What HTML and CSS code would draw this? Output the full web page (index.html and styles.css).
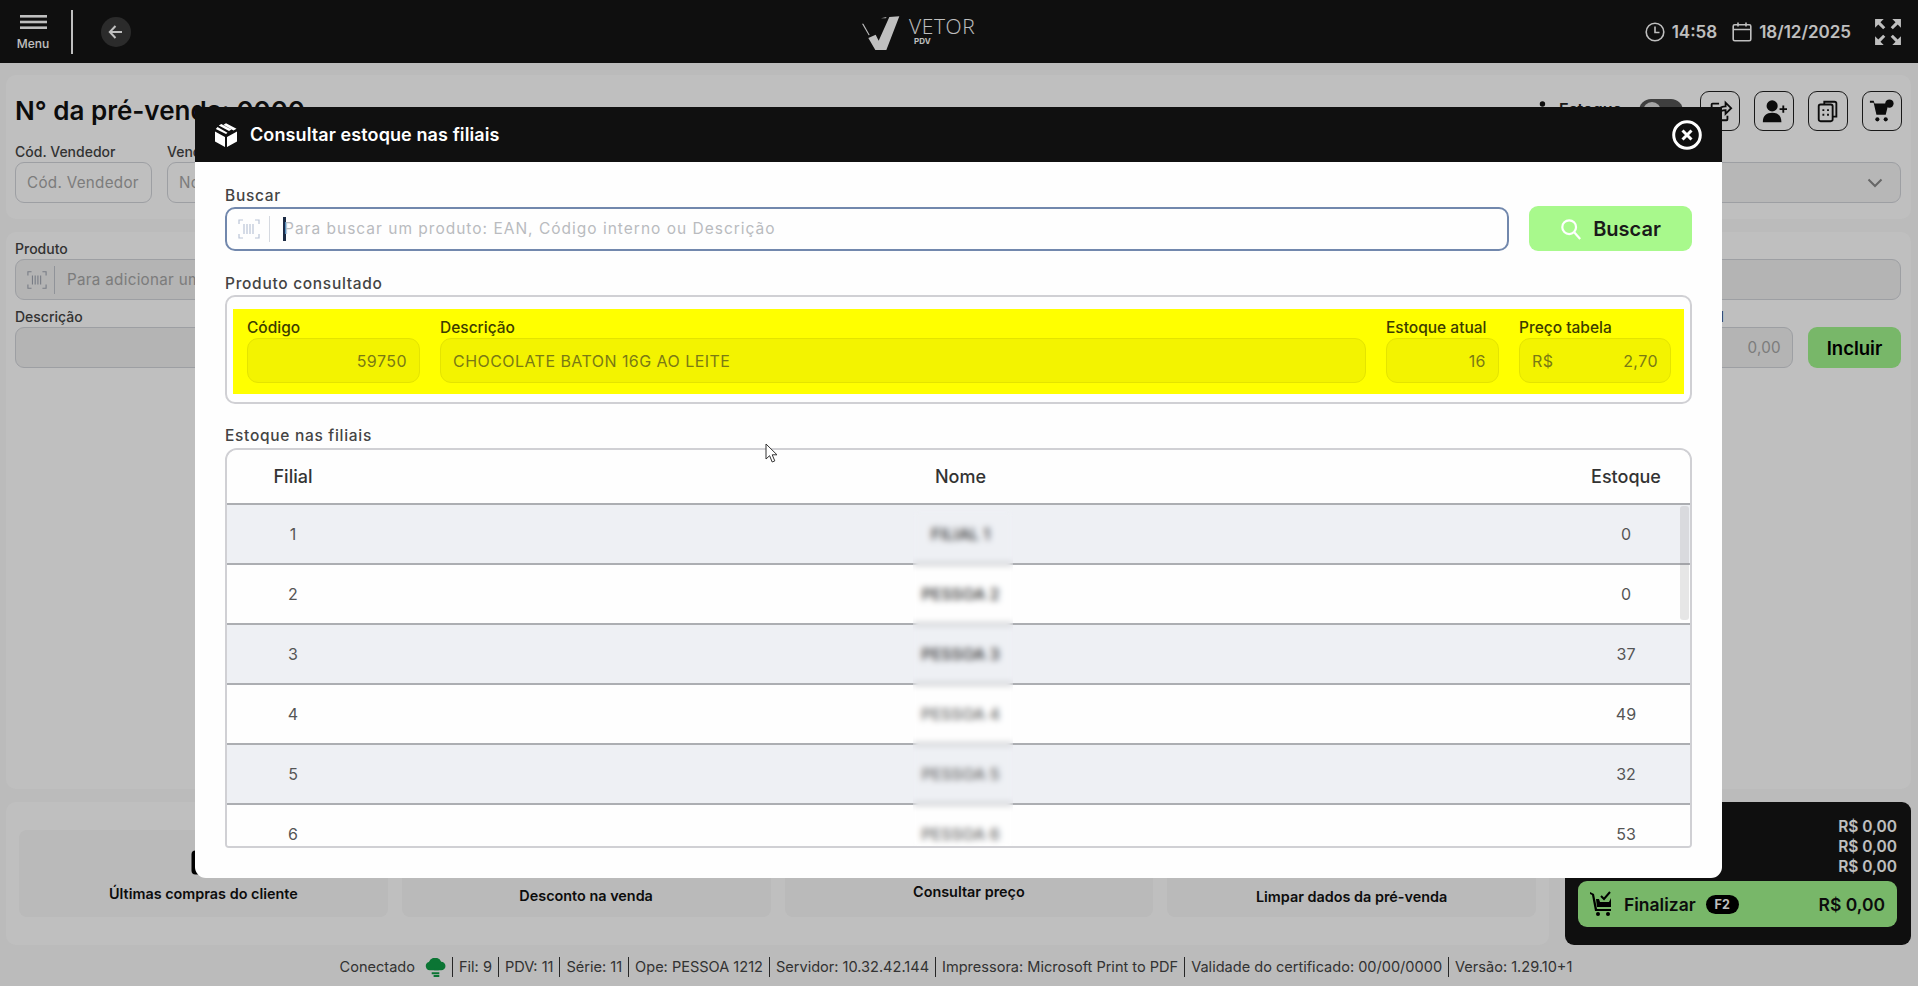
FILE: index.html
```html
<!DOCTYPE html>
<html lang="pt-BR">
<head>
<meta charset="utf-8">
<title>Consultar estoque nas filiais</title>
<link rel="stylesheet" href="styles.css">
</head>
<body>
<div class="page">
  <header class="topbar">
    <div class="top-left">
      <div class="menu">
        <svg class="menu-icon" viewBox="0 0 27 14"><rect y="0" width="27" height="2.6"/><rect y="5.7" width="27" height="2.6"/><rect y="11.4" width="27" height="2.6"/></svg>
        <span>Menu</span>
      </div>
      <div class="top-divider"></div>
      <div class="back">
        <svg viewBox="0 0 20 20"><path d="M16 10H4M9.5 4 3.8 10l5.7 6"/></svg>
      </div>
    </div>
    <div class="logo">
      <svg class="logo-mark" viewBox="60 36 120 108">
        <polygon points="145,42 175,40 136,141 103,141 82,105 104,95 113,113"/>
        <polygon points="63,62 67,62 86,96 83,97"/>
        <polygon points="120,46 137,42 134,46"/>
      </svg>
      <div class="logo-text"><span class="logo-name">VETOR</span><span class="logo-sub">PDV</span></div>
    </div>
    <div class="top-right">
      <svg class="clock" viewBox="0 0 20 20"><circle cx="10" cy="10" r="8.8"/><path d="M10 4.5V10.5H14.5"/></svg>
      <span class="time">14:58</span>
      <svg class="cal" viewBox="0 0 20 20"><rect x="1.2" y="2.8" width="17.6" height="16" rx="1.5"/><path d="M1.2 7.5H18.8M6 .5V4.5M14 .5V4.5"/></svg>
      <span class="date">18/12/2025</span>
      <svg class="expand" viewBox="1 1 26 26"><path d="M2 10V2H10L7 5 11.5 9.5 9.5 11.5 5 7ZM26 10V2H18L21 5 16.5 9.5 18.5 11.5 23 7ZM2 18V26H10L7 23 11.5 18.5 9.5 16.5 5 21ZM26 18V26H18L21 23 16.5 18.5 18.5 16.5 23 21Z"/></svg>
    </div>
  </header>

  <main class="content">
    <section class="card card-head">
      <div class="head-row">
        <h1 class="sale-title">N° da pré-venda: 0000</h1>
        <div class="head-tools">
          <svg class="stock-ico" viewBox="0 0 24 24"><path d="M2 10h6v9H2zM14 5.500a2.500 2.500 0 1 1-5 0 2.500 2.500 0 0 1 5 0zM9 9h5v10H9zM15 13h5v6h-5z"/></svg>
          <span class="stock-label">Estoque</span>
          <span class="toggle"><i></i></span>
          <button class="icon-btn"><svg viewBox="0 0 28 28"><path class="line" d="M13 6H6a1 1 0 0 0-1 1v11a1 1 0 0 0 1 1h3M12 13c2-3 5-4 8-4V5l6 6-6 6v-4c-3 0-6 1-8 4zM22 19v4a1 1 0 0 1-1 1H13v-5"/></svg></button>
          <button class="icon-btn"><svg viewBox="0 0 28 28"><circle cx="12" cy="8.5" r="6"/><path d="M2 26c0-7 4-10 10-10s10 3 10 10zM23 8h2v3h3v2h-3v3h-2v-3h-3v-2h3z"/></svg></button>
          <button class="icon-btn"><svg viewBox="0 0 28 28"><path class="line" d="M10 6V4h11a2 2 0 0 1 2 2v14h-3M6 7h11a2 2 0 0 1 2 2v14a2 2 0 0 1-2 2H6a2 2 0 0 1-2-2V9a2 2 0 0 1 2-2zM8 13h2M13 13h2M8 18h2M13 18h2"/></svg></button>
          <button class="icon-btn"><svg viewBox="0 0 28 28"><path d="M1 3h4l1 3h15l-3 12H8L5 5H1z"/><circle cx="9" cy="23" r="2.2"/><circle cx="18" cy="23" r="2.2"/><circle cx="22" cy="6" r="4.5"/></svg></button>
        </div>
      </div>
      <div class="head-fields">
        <div class="field"><label>Cód. Vendedor</label><div class="input">Cód. Vendedor</div></div>
        <div class="field"><label>Vendedor</label><div class="input">Nome do vendedor</div></div>
        <div class="field"><div class="field-spacer"></div><div class="input input-select"><svg viewBox="0 0 16 10"><path d="M1.5 1.5 8 8l6.5-6.5"/></svg></div></div>
      </div>
    </section>

    <section class="card card-product">
      <div class="field"><label>Produto</label>
        <div class="input input-dark">
          <svg class="barcode" viewBox="0 0 22 22"><path d="M1 6V2h4M17 2h4v4M1 16v4h4M17 20h4v-4M6 6v10M9 6v10M12 6v10M15 6v10"/></svg>
          <span class="ico-sep"></span>Para adicionar um produto
        </div>
      </div>
      <div class="product-row">
        <div class="field field-grow"><label>Descrição</label><div class="input input-dark"></div></div>
        <div class="field field-total"><label>Total</label><div class="input input-dark input-right">0,00</div></div>
        <button class="include">Incluir</button>
      </div>
    </section>

    <section class="bottom-row">
      <div class="card actions">
        <div class="tile tile-a"><svg class="tile-ico" viewBox="0 0 27 27"><rect x="1.5" y="1.5" width="24" height="24" rx="4"/></svg><span>Últimas compras do cliente</span></div>
        <div class="tile tile-b"><svg class="tile-ico" viewBox="0 0 27 27"><circle cx="13.5" cy="13.5" r="10"/></svg><span>Desconto na venda</span></div>
        <div class="tile tile-c"><svg class="tile-ico" viewBox="0 0 27 27"><circle cx="13.5" cy="13.5" r="10"/></svg><span>Consultar preço</span></div>
        <div class="tile tile-d"><svg class="tile-ico" viewBox="0 0 27 27"><circle cx="13.5" cy="13.5" r="13"/></svg><span>Limpar dados da pré-venda</span></div>
      </div>
      <aside class="totals">
        <div class="total-line">R$ 0,00</div>
        <div class="total-line">R$ 0,00</div>
        <div class="total-line">R$ 0,00</div>
        <button class="finish">
          <svg class="finish-ico" viewBox="0 0 26 26"><path d="M1 1 5 3l3 15h14v2H6L3 4 1 3z"/><path d="M7 8h3l1 3h9l2-4v9H8z"/><path class="check" d="M12 5l3 3 6-7"/><circle cx="9" cy="23" r="2"/><circle cx="19" cy="23" r="2"/></svg>
          <span class="finish-label">Finalizar</span>
          <span class="key">F2</span>
          <span class="finish-value">R$ 0,00</span>
        </button>
      </aside>
    </section>
  </main>

  <footer class="status">
    <span class="st-first">Conectado</span>
    <svg class="cloud" viewBox="0 0 22 20"><path d="M5 13a4.5 4.5 0 0 1-1-8.8A7 7 0 0 1 17 4a4.5 4.5 0 0 1 0 9z"/><path d="M7 15h8v2H7zM9 18h6v2H9zM9.5 11h5v2h-5z"/></svg>
    <span class="st">Fil: 9</span><span class="st">PDV: 11</span><span class="st">Série: 11</span><span class="st">Ope: PESSOA 1212</span><span class="st">Servidor: 10.32.42.144</span><span class="st">Impressora: Microsoft Print to PDF</span><span class="st">Validade do certificado: 00/00/0000</span><span class="st">Versão: 1.29.10+1</span>
  </footer>
</div>

<div class="backdrop"></div>

<div class="modal">
  <div class="modal-head">
    <svg class="box-ico" viewBox="0 0 24 24"><path d="M1 8.5 11 14v10L1 18.5zM23 8.5 13 14v10l10-5.500zM7.300 1 17.500 6.500 15 8 4.800 2.500zM12 .2 22.500 5.800 19.500 7.400 9.500 1.800zM3.500 4 13.500 9.800 12 11 1.800 6z"/></svg>
    <h2>Consultar estoque nas filiais</h2>
    <svg class="close-ico" viewBox="0 0 30 30"><circle cx="15" cy="15" r="13.300"/><path d="M10.500 10.500l9 9M19.500 10.500l-9 9"/></svg>
  </div>
  <div class="modal-body">
    <label class="m-label">Buscar</label>
    <div class="search-row">
      <div class="search-input">
        <svg class="barcode" viewBox="0 0 22 22"><path d="M1 6V2h4M17 2h4v4M1 16v4h4M17 20h4v-4M6 6v10M9 6v10M12 6v10M15 6v10"/></svg>
        <span class="ico-sep"></span>
        <span class="caret"></span>
        <span class="placeholder">Para buscar um produto: EAN, Código interno ou Descrição</span>
      </div>
      <button class="search-btn">
        <svg viewBox="0 0 24 24"><circle cx="10" cy="10" r="7.500"/><path d="M15.500 15.500 22 23"/></svg>
        Buscar
      </button>
    </div>

    <label class="m-label m-label-gap">Produto consultado</label>
    <div class="product-box">
      <div class="product-hl">
        <div class="hl-field"><label>Código</label><div class="hl-input hl-right">59750</div></div>
        <div class="hl-field"><label>Descrição</label><div class="hl-input">CHOCOLATE BATON 16G AO LEITE</div></div>
        <div class="hl-field"><label>Estoque atual</label><div class="hl-input hl-right">16</div></div>
        <div class="hl-field"><label>Preço tabela</label><div class="hl-input hl-split"><span>R$</span><span>2,70</span></div></div>
      </div>
    </div>

    <label class="m-label m-label-gap2">Estoque nas filiais</label>
    <div class="table">
      <div class="t-row t-head"><span>Filial</span><span>Nome</span><span>Estoque</span></div>
      <div class="t-row t-odd"><span>1</span><span class="t-name">FILIAL 1</span><span>0</span></div>
      <div class="t-row"><span>2</span><span class="t-name">PESSOA 2</span><span>0</span></div>
      <div class="t-row t-odd"><span>3</span><span class="t-name">PESSOA 3</span><span>37</span></div>
      <div class="t-row"><span>4</span><span class="t-name t-faint">PESSOA 4</span><span>49</span></div>
      <div class="t-row t-odd"><span>5</span><span class="t-name t-faint">PESSOA 5</span><span>32</span></div>
      <div class="t-row"><span>6</span><span class="t-name t-faint">PESSOA 6</span><span>53</span></div>
      <div class="t-blur"></div>
      <div class="t-scroll"></div>
    </div>
  </div>
  <svg class="pointer" viewBox="0 0 13 20"><path d="M1 1v15l3.600-3.300L7.200 19l2.600-1.100-2.600-6.100H12z"/></svg>
</div>
</body>
</html>
```
FILE: styles.css
```css
* { box-sizing: border-box; }
html, body { margin: 0; height: 100%; overflow: hidden; }
body { font-family: Inter, "Liberation Sans", sans-serif; color: #222; background: #fafafa; }
button { font-family: inherit; border: 0; padding: 0; }
label { display: block; font-size: 14px; font-weight: 500; line-height: 14px; color: #444; }

.page { width: 1918px; height: 986px; display: flex; flex-direction: column; }

/* top bar */
.topbar { height: 63px; flex: none; background: #151515; display: flex; align-items: center; color: #fff; }
.top-left { flex: 0 0 861px; display: flex; align-items: center; }
.menu { width: 40px; margin-left: 13px; display: flex; flex-direction: column; align-items: center; gap: 8px; font-size: 12px; font-weight: 500; line-height: 13px; padding-top: 2px; }
.menu-icon { width: 27px; height: 14px; fill: #fff; }
.top-divider { width: 2px; height: 44px; margin-left: 18px; background: #fff; }
.back { width: 30px; height: 30px; margin-left: 28px; border-radius: 50%; background: #3a3a3a; display: flex; align-items: center; justify-content: center; }
.back svg { width: 20px; height: 20px; fill: none; stroke: #fff; stroke-width: 2; }
.logo { display: flex; align-items: flex-start; gap: 8px; margin-top: 2px; }
.logo-mark { width: 40px; height: 36px; fill: #fff; }
.logo-text { display: flex; flex-direction: column; }
.logo-name { font-family: "Open Sans", sans-serif; font-size: 21px; font-weight: 300; line-height: 22px; letter-spacing: .6px; color: #fff; }
.logo-sub { font-size: 8px; font-weight: 700; line-height: 9px; margin-left: 5px; color: #fff; }
.top-right { margin-left: auto; display: flex; align-items: center; padding-right: 16px; font-size: 17px; font-weight: 600; }
.clock, .cal { width: 20px; height: 20px; fill: none; stroke: #fff; stroke-width: 1.6; }
.time { margin-left: 7px; }
.cal { margin-left: 15px; }
.date { margin-left: 7px; }
.expand { width: 28px; height: 28px; margin-left: 23px; fill: #fff; }

/* content */
.content { flex: none; display: flex; flex-direction: column; gap: 13px; padding: 12px 7px 0 6px; height: 883px; }
.card { background: #fff; border-radius: 10px; }
.card-head { height: 144px; padding: 16px 9px 0 9px; }
.head-row { display: flex; justify-content: space-between; align-items: center; height: 39px; }
.sale-title { margin: 0; font-size: 26px; font-weight: 600; color: #111; line-height: 39px; }
.head-tools { display: flex; align-items: center; }
.stock-ico { width: 26px; height: 26px; fill: #111; }
.stock-label { margin: -4px 0 0 3px; font-size: 16px; font-weight: 600; }
.toggle { width: 44px; height: 24px; margin: 0 17px; border-radius: 12px; background: #555; display: block; padding: 3px 0 0 4px; }
.toggle i { display: block; width: 18px; height: 18px; border-radius: 50%; background: #ddd; }
.icon-btn { width: 40px; height: 40px; margin-left: 14px; background: transparent; border: 1.5px solid #222; border-radius: 9px; display: flex; align-items: center; justify-content: center; }
.toggle + .icon-btn { margin-left: 0; }
.icon-btn svg { width: 26px; height: 26px; fill: #111; }
.icon-btn svg .line { fill: none; stroke: #111; stroke-width: 2; }
.head-fields { display: grid; grid-template-columns: 137px 1fr 1fr; gap: 15px; margin-top: 15px; padding-right: 1px; }
.field label { margin-bottom: 3px; }
.field-spacer { height: 17px; }
.input { height: 41px; border: 1.5px solid #d2d4da; border-radius: 9px; display: flex; align-items: center; padding: 0 11px; font-size: 15.200px; letter-spacing: .3px; white-space: nowrap; color: #a6a6a6; background: #fff; }
.input-select { justify-content: flex-end; background: #f4f4f4; }
.input-select svg { width: 16px; height: 10px; margin-right: 6px; fill: none; stroke: #888; stroke-width: 2; }
.input-dark { background: #f0f0f0; }
.input-right { justify-content: flex-end; }
.barcode { width: 20px; height: 20px; fill: none; stroke: #a0a6b2; stroke-width: 1.2; flex: none; }
.ico-sep { width: 1px; height: 28px; margin: 0 12px 0 7px; background: #c0c4cc; flex: none; }

.card-product { height: 557px; padding: 10px 10px 0 9px; }
.product-row { display: flex; align-items: flex-end; gap: 15px; margin-top: 10px; }
.field-grow { flex: 1; }
.field-total { width: 102px; }
.include { width: 93px; height: 41px; background: #a0f58c; border-radius: 9px; font-size: 18.500px; font-weight: 600; color: #000; }

.bottom-row { display: flex; height: 143px; gap: 15px; }
.actions { width: 1545px; padding: 28px 13px 0; display: grid; grid-template-columns: repeat(4, 1fr); gap: 14px; align-items: start; }
.tile { height: 87px; border-radius: 8px; background: #f8f8f8; display: flex; flex-direction: column; align-items: center; font-size: 14.400px; font-weight: 600; color: #111; padding-top: 19px; }
.tile-ico { width: 27px; height: 27px; fill: #000; flex: none; }
.tile-a span { margin-top: 9px; }
.tile-b span { margin-top: 11px; }
.tile-c span { margin-top: 7px; }
.tile-d span { margin-top: 12px; }
.totals { width: 346px; margin-left: 1px; background: #141414; border-radius: 9px; padding: 15px 14px 0 13px; color: #fff; }
.total-line { text-align: right; font-size: 15.500px; font-weight: 600; line-height: 20px; }
.finish { margin-top: 4px; width: 319px; height: 46px; background: #a0f58c; border-radius: 9px; display: flex; align-items: center; padding: 0 12px 0 11px; font-size: 17.500px; font-weight: 600; color: #111; }
.finish-ico { width: 26px; height: 26px; fill: #000; }
.finish-ico .check { fill: none; stroke: #000; stroke-width: 2; }
.finish-label { margin-left: 9px; }
.key { margin-left: 10px; width: 33px; height: 19px; border-radius: 10px; background: #000; color: #fff; font-size: 12.500px; font-weight: 700; line-height: 19px; text-align: center; }
.finish-value { margin-left: auto; }

/* status bar */
.status { flex: 1; display: flex; align-items: center; justify-content: center; font-size: 14.550px; color: #444; padding-top: 2px; }
.cloud { width: 21px; height: 19px; margin: 0 6px 0 10px; fill: #0f9d46; }
.st { border-left: 1px solid #333; height: 20px; line-height: 20px; padding: 0 6px; }

/* overlay */
.backdrop { position: fixed; inset: 0; background: rgba(0, 0, 0, .25); }

/* modal */
.modal { position: fixed; left: 195px; top: 107px; width: 1527px; height: 771px; background: #fefefe; border-radius: 0 0 11px 11px; }
.modal-head { height: 55px; background: #101010; display: flex; align-items: center; padding: 0 20px 0 19px; color: #fff; }
.box-ico { width: 24px; height: 24px; fill: #fff; }
.modal-head h2 { margin: 0 0 0 12px; font-size: 18px; font-weight: 600; letter-spacing: .1px; }
.close-ico { width: 30px; height: 30px; margin-left: auto; fill: none; stroke: #fff; stroke-width: 3; }
.modal-body { padding: 27px 30px 0; }
.m-label { font-size: 15.500px; font-weight: 500; letter-spacing: .7px; color: #444; }
.m-label-gap { margin-top: 26px; }
.m-label-gap2 { margin-top: 25px; }
.search-row { display: flex; gap: 20px; align-items: flex-end; margin-top: 3px; }
.search-input { flex: 1; height: 44px; border: 2px solid #7288ad; border-radius: 10px; display: flex; align-items: center; padding-left: 11px; }
.search-input .barcode { width: 22px; height: 22px; stroke: #b9c4d6; }
.search-input .ico-sep { margin: 0 13px 0 9px; height: 26px; background: #d5d9e0; }
.caret { width: 3px; height: 24px; background: #1c2b44; flex: none; margin-right: -2px; }
.placeholder { font-size: 15.500px; letter-spacing: 1px; line-height: 20px; color: #b9bbbf; }
.search-btn { width: 163px; height: 45px; background: #a8f98c; border-radius: 9px; display: flex; align-items: center; justify-content: center; gap: 11px; font-size: 20px; font-weight: 600; color: #1a1a1a; }
.search-btn svg { width: 22px; height: 24px; fill: none; stroke: #fff; stroke-width: 2.4; }
.product-box { height: 109px; margin-top: 4px; border: 2px solid #d0d0d4; border-radius: 10px; padding: 12px 6px 0; }
.product-hl { height: 85px; background: #ff0; padding: 12px 13px 0 14px; display: grid; grid-template-columns: 173px 1fr 113px 152px; gap: 20px; }
.hl-field label { color: #3c3c00; font-size: 15.500px; margin-bottom: 3px; }
.hl-input { height: 45px; border: 1.5px solid #e4e400; border-radius: 11px; background: #f3f300; display: flex; align-items: center; padding: 0 12px; font-size: 16px; letter-spacing: .45px; color: #7a7a14; }
.hl-right { justify-content: flex-end; }
.hl-split { justify-content: space-between; }
.table { position: relative; height: 400px; margin-top: 5px; overflow: hidden; border: 2px solid #d0d0d4; border-radius: 12px 12px 4px 4px; }
.t-row { height: 60px; display: grid; grid-template-columns: 132px 1fr 128px; align-items: center; justify-items: center; border-bottom: 2px solid #acaeb2; font-size: 16px; color: #555; background: #fefefe; }
.t-head { height: 55px; font-size: 18px; font-weight: 500; color: #333; }
.t-odd { background: #eef0f4; }
.t-name { font-size: 16px; font-weight: 600; color: #444; }
.t-faint { color: #777; }
.t-blur { position: absolute; left: 686px; top: 60px; bottom: 0; width: 100px; backdrop-filter: blur(3px); }
.t-scroll { position: absolute; right: 1px; top: 56px; width: 9px; height: 114px; background: rgba(120, 120, 120, .18); border-radius: 3px; }
.pointer { position: absolute; left: 570px; top: 336px; width: 13px; height: 20px; fill: #fff; stroke: #333; stroke-width: 1; }
```
